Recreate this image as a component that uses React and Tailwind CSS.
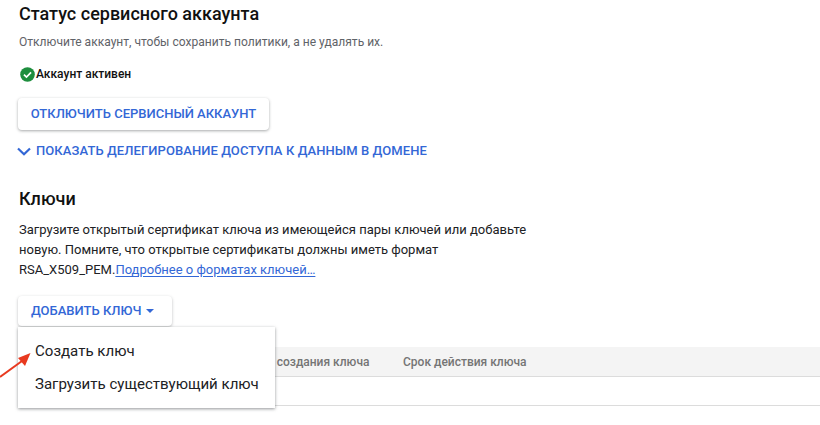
const font = { fontFamily: 'Roboto, sans-serif' };

function CheckIcon() {
    return <svg width="15" height="15" viewBox="0 0 16 16" className="shrink-0 ml-[1px]">
        <circle cx="8" cy="8" r="7.8" fill="#1e8e3e" />
        <path d="M4.2 8.2l2.7 2.6 4.9-5" fill="none" stroke="#fff" strokeWidth="1.8" />
    </svg>;
}

function Chevron() {
    return <svg width="14" height="9" viewBox="0 0 14 9" className="shrink-0">
        <path d="M1 1.5L7 7.3L13 1.5" fill="none" stroke="#3367d6" strokeWidth="2.2" />
    </svg>;
}

function Arrow() {
    return <svg width="36" height="30" viewBox="0 0 36 30" className="absolute left-0 top-[350px]">
        <path d="M0 27L22 11" stroke="#e8391f" strokeWidth="2" />
        <path d="M30.5 3L18 8L25 16Z" fill="#e8391f" />
    </svg>;
}

export default function App() {
    return <div className="relative w-[820px] h-[425px] overflow-hidden bg-white font-['Roboto',sans-serif]" style={font}>
        <div className="pl-[19px] pt-[2px]">
            <h1 className="text-[18px] leading-[24px] font-medium text-[#111]">Статус сервисного аккаунта</h1>
            <p className="mt-[6px] text-[12.05px] leading-[20px] text-[#5f6368]">Отключите аккаунт, чтобы сохранить политики, а не удалять их.</p>

            <div className="mt-[12px] flex items-center gap-[1px] h-[20px] text-[12px] font-medium text-[#111]">
                <CheckIcon />
                <span>Аккаунт активен</span>
            </div>

            <button className="block mt-[14px] -ml-[1px] w-[251px] h-[32px] rounded-[4px] bg-white text-[13px] font-medium text-[#3367d6] shadow-[0_1px_3px_rgba(60,64,67,0.45)]">
                ОТКЛЮЧИТЬ СЕРВИСНЫЙ АККАУНТ
            </button>

            <div className="mt-[12px] -ml-[2px] flex items-center gap-[5px] h-[18px] text-[13px] tracking-[0.08px] font-medium text-[#3367d6]">
                <Chevron />
                <span>ПОКАЗАТЬ ДЕЛЕГИРОВАНИЕ ДОСТУПА К ДАННЫМ В ДОМЕНЕ</span>
            </div>

            <h2 className="mt-[27px] text-[18px] leading-[24px] font-medium text-[#111]">Ключи</h2>
            <p className="mt-[9px] w-[520px] text-[13px] leading-[20px] text-[#202124]">
                Загрузите открытый сертификат ключа из имеющейся пары ключей или добавьте новую. Помните, что открытые сертификаты должны иметь формат RSA_X509_PEM.
                <a className="text-[#3367d6] underline underline-offset-2">Подробнее о форматах ключей…</a>
            </p>

            <button className="mt-[16px] -ml-[1px] flex items-center gap-[5px] pl-[13px] w-[154px] h-[30px] rounded-[4px] bg-white text-[13px] font-medium text-[#3367d6] shadow-[0_1px_3px_rgba(60,64,67,0.35)]">
                ДОБАВИТЬ КЛЮЧ
                <span className="w-0 h-0 border-x-[4px] border-x-transparent border-t-[4px] border-t-[#3367d6]"></span>
            </button>
        </div>

        <div className="ml-[18px] mt-[21px]">
            <div className="flex items-center h-[30px] bg-[#f4f4f4] border-b border-[#dcdcdc] text-[12px] font-medium text-[#757575]">
                <span className="w-[227px] pl-[16px]">Ключ</span>
                <span className="w-[158px] pl-[1px]">Дата создания ключа</span>
                <span>Срок действия ключа</span>
            </div>
            <div className="h-[29px] border-b border-[#dcdcdc]"></div>
        </div>

        <div className="absolute left-[18px] top-[327px] w-[257px] h-[81px] bg-white py-[8px] text-[15.05px] text-[#202124] shadow-[0_1px_3px_rgba(60,64,67,0.55)]">
            <div className="h-[33px] pl-[17px] flex items-center">Создать ключ</div>
            <div className="h-[33px] pl-[17px] flex items-center">Загрузить существующий ключ</div>
        </div>

        <Arrow />
    </div>;
}
